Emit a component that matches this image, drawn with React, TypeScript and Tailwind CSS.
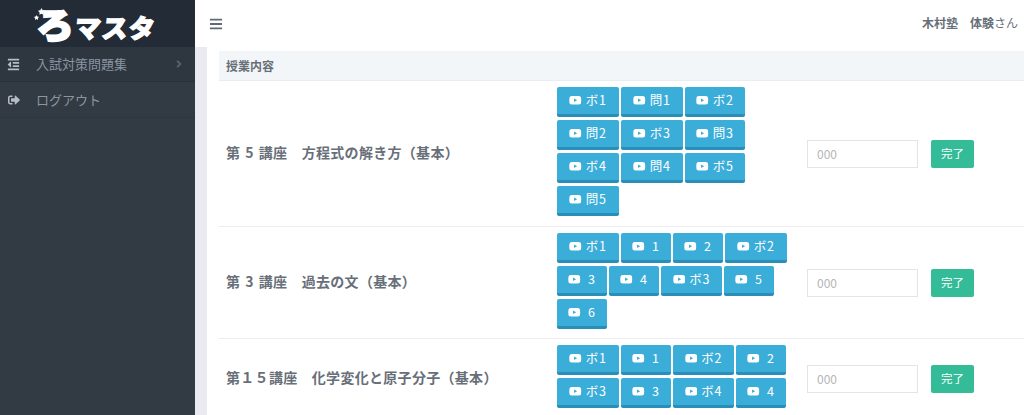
import React from "react";
import { FaYoutube, FaBars, FaOutdent, FaSignOutAlt, FaAngleRight, FaStar } from "react-icons/fa";

const font = "[font-family:'Noto_Sans_CJK_JP','Noto_Sans',sans-serif]";

function VideoBtn({ label, w }: { label: string; w: string }) {
  const gap = label.length === 1 ? "gap-[7px]" : "gap-[4px]";
  return (
    <button className={`${w} ${gap} h-[30px] flex items-center justify-center bg-[#3badd9] border-b-[3px] border-[#2a8fb8] rounded-[2px] text-white text-[12.5px] leading-none tracking-[0.8px]`}>
      <FaYoutube className="text-[12.5px] shrink-0" />
      <span className="-mt-[1px]">{label}</span>
    </button>
  );
}

type B = [string, string];
const rows: { title: string; h: string; buttons: B[] }[] = [
  {
    title: "第 5 講座　方程式の解き方（基本）",
    h: "h-[146px]",
    buttons: [
      ["ボ1", "w-[62px]"], ["問1", "w-[62px]"], ["ボ2", "w-[60px]"],
      ["問2", "w-[62px]"], ["ボ3", "w-[62px]"], ["問3", "w-[60px]"],
      ["ボ4", "w-[62px]"], ["問4", "w-[62px]"], ["ボ5", "w-[60px]"],
      ["問5", "w-[62px]"],
    ],
  },
  {
    title: "第 3 講座　過去の文（基本）",
    h: "h-[112px]",
    buttons: [
      ["ボ1", "w-[62px]"], ["1", "w-[50px]"], ["2", "w-[50px]"], ["ボ2", "w-[62px]"],
      ["3", "w-[50px]"], ["4", "w-[50px]"], ["ボ3", "w-[61px]"], ["5", "w-[50px]"],
      ["6", "w-[50px]"],
    ],
  },
  {
    title: "第１５講座　化学変化と原子分子（基本）",
    h: "h-[80px]",
    buttons: [
      ["ボ1", "w-[62px]"], ["1", "w-[50px]"], ["ボ2", "w-[61px]"], ["2", "w-[50px]"],
      ["ボ3", "w-[62px]"], ["3", "w-[50px]"], ["ボ4", "w-[61px]"], ["4", "w-[50px]"],
    ],
  },
];

export default function App() {
  return (
    <div className={`${font} w-[1024px] h-[415px] overflow-hidden flex bg-white text-[#686f79]`}>
      <aside className="w-[195px] shrink-0 bg-[#323a43] flex flex-col">
        <div className="h-[47px] bg-[#232b36] flex items-center pl-[38px] relative">
          <FaStar className="absolute left-[38px] top-[8px] text-white text-[7px]" />
          <FaStar className="absolute left-[34px] top-[15px] text-white text-[5px]" />
          <span className="text-white font-black text-[34px] leading-[40px] [-webkit-text-stroke:2.5px_white] scale-x-[1.08]">ろ</span>
          <span className="text-white font-black text-[26px] leading-[30px] ml-[3px] mt-[7px] tracking-[1px] -skew-x-6 [-webkit-text-stroke:1.2px_white]">マスタ</span>
        </div>
        <div className="h-[35px] flex items-center bg-[#2e3740] border-b border-[#29323a] text-[#8b95a0] text-[13px]">
          <FaOutdent className="ml-[7px] text-[13px] text-[#b5bcc3]" />
          <span className="ml-[16px] flex-1">入試対策問題集</span>
          <FaAngleRight className="mr-[10px] text-[12px] text-[#57616b]" />
        </div>
        <div className="h-[36px] flex items-center border-b border-[#2d353e] text-[#8b95a0] text-[13px]">
          <FaSignOutAlt className="ml-[8px] text-[12px] text-[#b5bcc3]" />
          <span className="ml-[16px]">ログアウト</span>
        </div>
      </aside>
      <main className="flex-1 flex flex-col min-w-0">
        <header className="h-[47px] shrink-0 flex items-center justify-between">
          <FaBars className="ml-[14px] text-[14px] text-[#5f6b76]" />
          <div className="mr-[6px] text-[12px] -mt-[1px]">
            <b className="font-bold">木村塾　体験</b>さん
          </div>
        </header>
        <div className="flex-1 flex min-h-0">
          <div className="w-[12px] shrink-0 bg-[#e9ebf0]" />
          <div className="flex-1 min-w-0 pl-[12px] pt-[4px]">
            <div className="h-[30px] bg-[#f3f6f8] border-b border-[#e9ecf1] flex items-center pl-[7px] text-[12px] font-bold">授業内容</div>
            {rows.map((r) => (
              <div key={r.title} className={`${r.h} shrink-0 flex border-b border-[#ececf0]`}>
                <div className="w-[338px] shrink-0 pl-[7px] pb-[2px] flex items-center text-[14px] font-bold tracking-[0.3px] [word-spacing:1.5px] whitespace-nowrap">{r.title}</div>
                <div className="w-[250px] shrink-0 pt-[6px] flex flex-wrap content-start gap-x-[2px] gap-y-[3px]">
                  {r.buttons.map((b, i) => (
                    <VideoBtn key={i} label={b[0]} w={b[1]} />
                  ))}
                </div>
                <div className="flex items-center">
                  <input placeholder="000" className="w-[111px] h-[28px] border border-[#e2e4e6] px-[9px] text-[12px] placeholder:text-[#b5b5b5] bg-white outline-none" />
                  <button className="ml-[13px] w-[43px] h-[28px] rounded-[2px] bg-[#34bc98] text-white text-[11.5px]">完了</button>
                </div>
              </div>
            ))}
          </div>
        </div>
      </main>
    </div>
  );
}
